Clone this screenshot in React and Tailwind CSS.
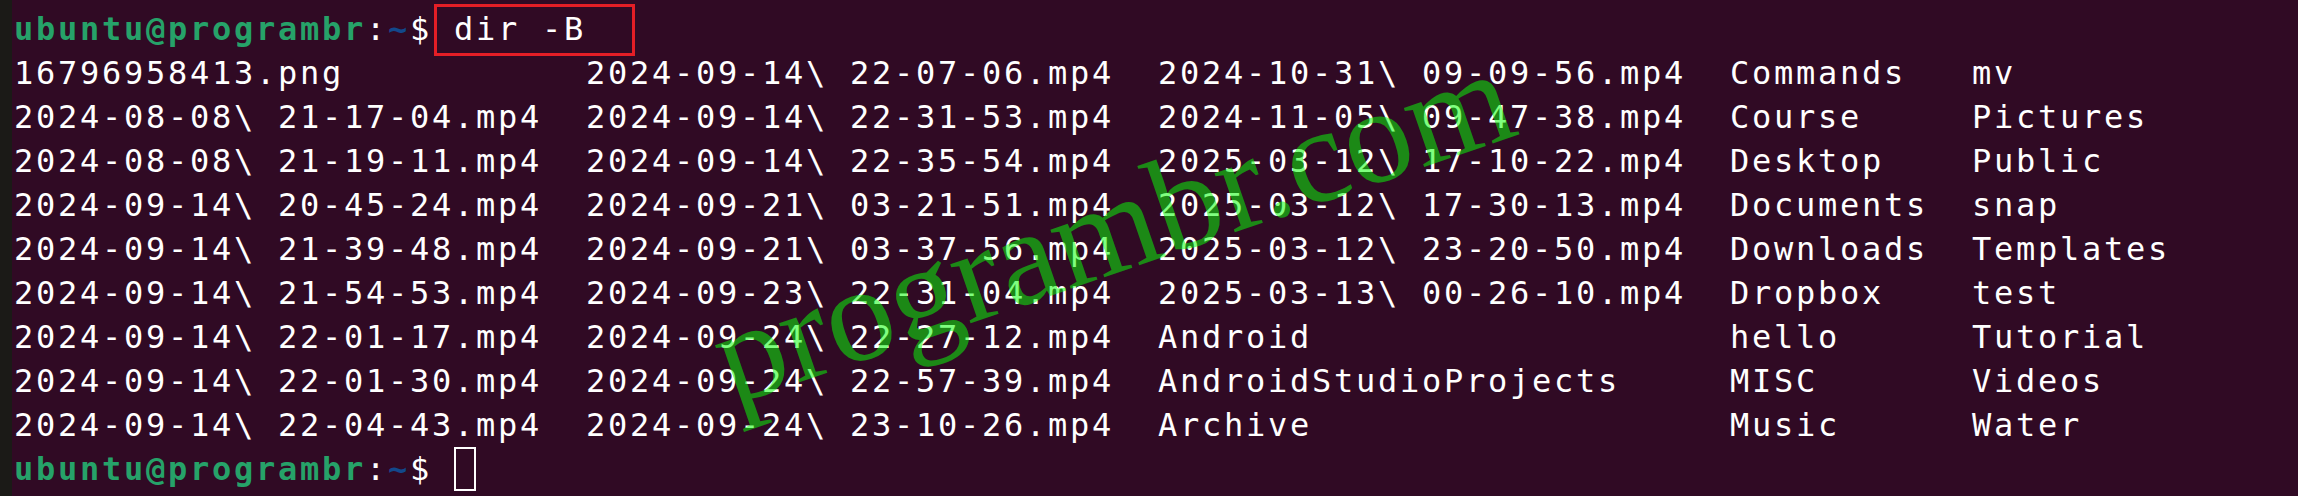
const col1 = ["16796958413.png","2024-08-08\\ 21-17-04.mp4","2024-08-08\\ 21-19-11.mp4","2024-09-14\\ 20-45-24.mp4","2024-09-14\\ 21-39-48.mp4","2024-09-14\\ 21-54-53.mp4","2024-09-14\\ 22-01-17.mp4","2024-09-14\\ 22-01-30.mp4","2024-09-14\\ 22-04-43.mp4"];
const col2 = ["2024-09-14\\ 22-07-06.mp4","2024-09-14\\ 22-31-53.mp4","2024-09-14\\ 22-35-54.mp4","2024-09-21\\ 03-21-51.mp4","2024-09-21\\ 03-37-56.mp4","2024-09-23\\ 22-31-04.mp4","2024-09-24\\ 22-27-12.mp4","2024-09-24\\ 22-57-39.mp4","2024-09-24\\ 23-10-26.mp4"];
const col3 = ["2024-10-31\\ 09-09-56.mp4","2024-11-05\\ 09-47-38.mp4","2025-03-12\\ 17-10-22.mp4","2025-03-12\\ 17-30-13.mp4","2025-03-12\\ 23-20-50.mp4","2025-03-13\\ 00-26-10.mp4","Android","AndroidStudioProjects","Archive"];
const col4 = ["Commands","Course","Desktop","Documents","Downloads","Dropbox","hello","MISC","Music"];
const col5 = ["mv","Pictures","Public","snap","Templates","test","Tutorial","Videos","Water"];

const rows = col1.map(
  (c, i) => c.padEnd(26) + col2[i].padEnd(26) + col3[i].padEnd(26) + col4[i].padEnd(11) + col5[i]
);

function Prompt() {
  return (
    <>
      <span className="font-bold text-[#26a269]">ubuntu@programbr</span>
      <span>:</span>
      <span className="font-bold text-[#12488b]">~</span>
      <span>$</span>
    </>
  );
}

export default function App() {
  return (
    <div className="relative flex h-[496px] w-[2298px] overflow-hidden bg-[#300a24]">
      <div className="w-[12px] shrink-0 bg-[#1b1a17]" />
      <div className="flex-1 whitespace-pre pl-[2px] pt-[7px] font-['DejaVu_Sans_Mono',monospace] text-[32px] leading-[44px] tracking-[2.734px] text-white">
        <div className="relative">
          <Prompt />
          <span> dir -B</span>
          <div className="absolute left-[420px] top-[-3px] h-[52px] w-[201px] border-[3px] border-[#e41e26]" />
        </div>
        {rows.map((r, i) => (
          <div key={i}>{r}</div>
        ))}
        <div>
          <Prompt />
          <span> </span>
          <span className="inline-block h-[44px] w-[22px] border-2 border-white align-top" />
        </div>
      </div>
      <div className="pointer-events-none absolute left-[1112px] top-[226px] -translate-x-1/2 -translate-y-1/2 rotate-[-19deg] whitespace-nowrap font-['Liberation_Serif',serif] text-[136px] leading-[136px] text-[#0aff0a85]">
        programbr.com
      </div>
    </div>
  );
}
